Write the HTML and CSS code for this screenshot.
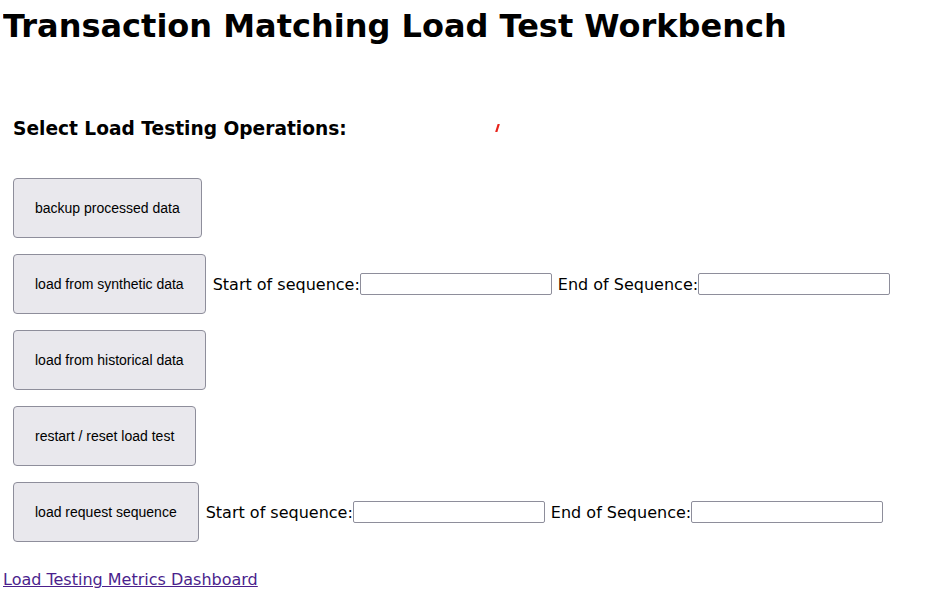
FILE: index.html
```html
<!DOCTYPE html>
<html>
<head>
<meta charset="utf-8">
<title>Transaction Matching Load Test Workbench</title>
<link rel="stylesheet" href="styles.css">
</head>
<body>
<h1 class="title">Transaction Matching Load Test Workbench</h1>
<section class="ops">
  <div class="ops-head">
    <h2 class="ops-title">Select Load Testing Operations:</h2>
    <svg class="mark" width="5" height="8" viewBox="0 0 5 8"><path d="M3.6 0.5 L1.4 7.5" stroke="#e8241c" stroke-width="2.2" stroke-linecap="round"/></svg>
  </div>
  <div class="ops-list">
    <div class="op-row"><button class="op-btn">backup processed data</button></div>
    <div class="op-row">
      <button class="op-btn">load from synthetic data</button>
      <label class="field">Start of sequence:<input class="field-input" type="text"></label>
      <label class="field">End of Sequence:<input class="field-input" type="text"></label>
    </div>
    <div class="op-row"><button class="op-btn">load from historical data</button></div>
    <div class="op-row"><button class="op-btn">restart / reset load test</button></div>
    <div class="op-row">
      <button class="op-btn">load request sequence</button>
      <label class="field">Start of sequence:<input class="field-input" type="text"></label>
      <label class="field">End of Sequence:<input class="field-input" type="text"></label>
    </div>
  </div>
</section>
<a class="dash-link" href="#">Load Testing Metrics Dashboard</a>
</body>
</html>
```
FILE: styles.css
```css
html, body {
  background: #ffffff;
}
body {
  margin: 8px 3px;
  font-family: "DejaVu Sans", Verdana, sans-serif;
  color: #000;
}
.title {
  margin: 0;
  font-size: 32px;
  font-weight: bold;
  line-height: 37px;
}
.ops {
  padding-left: 10px;
}
.ops-head {
  display: flex;
  align-items: center;
  margin-top: 72px;
}
.ops-title {
  margin: 0;
  font-size: 18.6px;
  font-weight: bold;
  line-height: 23px;
}
.mark {
  margin-left: 148px;
  margin-top: -2px;
}
.ops-list {
  display: flex;
  flex-direction: column;
  gap: 16px;
  margin-top: 38px;
}
.op-row {
  display: flex;
  align-items: center;
  gap: 6px;
}
.op-btn {
  height: 60px;
  padding: 0 21px;
  margin-right: 1px;
  font-family: "Liberation Sans", Arial, sans-serif;
  font-size: 14px;
  color: #000;
  background: #e9e8ed;
  border: 1px solid #8e8e9b;
  border-radius: 4px;
}
.field {
  display: flex;
  align-items: center;
  font-size: 16px;
  line-height: 19px;
}
.field-input {
  width: 192px;
  height: 22px;
  box-sizing: border-box;
  margin: 0;
  padding: 1px 2px;
  border: 1px solid #8e8e9b;
  border-radius: 2px;
  background: #fff;
}
.dash-link {
  display: inline-block;
  margin-top: 28px;
  font-size: 16px;
  line-height: 19px;
  color: #4b1f8d;
}
```
